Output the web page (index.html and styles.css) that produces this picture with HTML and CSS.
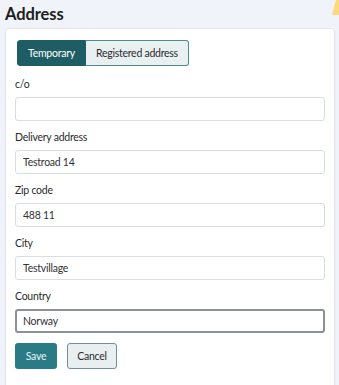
FILE: index.html
```html
<html>
    <head>
        <title>Address</title>
        <link rel="stylesheet" href="styles.css">
    </head>
    <body>
        <div class="corner"></div>
        <h1 class="title">Address</h1>
        <div class="card">
            <div class="toggle">
                <button class="toggleButton active">Temporary</button>
                <button class="toggleButton">Registered address</button>
            </div>
            <form class="addressForm">
                <label class="fieldLabel" for="co">c/o</label>
                <input type="text" id="co" class="field" value="" />

                <label class="fieldLabel" for="delivery">Delivery address</label>
                <input type="text" id="delivery" class="field" value="Testroad 14" />

                <label class="fieldLabel" for="zip">Zip code</label>
                <input type="text" id="zip" class="field" value="488 11" />

                <label class="fieldLabel" for="city">City</label>
                <input type="text" id="city" class="field" value="Testvillage" />

                <label class="fieldLabel" for="country">Country</label>
                <input type="text" id="country" class="field focused" value="Norway" />

                <div class="actions">
                    <button type="button" class="saveButton">Save</button>
                    <button type="button" class="cancelButton">Cancel</button>
                </div>
            </form>
        </div>
    </body>
</html>
```

FILE: styles.css
```css
body{
    margin: 0;
    padding: 0 4px 0 5px;
    background: #f0f3f9;
    font-family: Lato, "Noto Sans", sans-serif;
    color: #2b2b2b;
    position: relative;
    overflow: hidden;
}
.corner{
    position: absolute;
    top: 0;
    right: 0;
    width: 7px;
    height: 15px;
    background: #fcd97a;
    clip-path: polygon(4px 0, 7px 0, 7px 15px, 0 15px);
}
.title{
    margin: 0;
    height: 28px;
    line-height: 28px;
    font-size: 16.5px;
    font-weight: bold;
    letter-spacing: -0.1px;
    color: #1e1e1e;
}
.card{
    background: #ffffff;
    border: 1px solid #e3e6ec;
    border-radius: 3px;
    box-shadow: 0 1px 2px rgba(0,0,0,0.08);
    padding: 11px 9px 11px 9px;
}
.toggle{
    display: flex;
    margin-left: 2px;
}
.toggleButton{
    height: 26px;
    padding: 0 10px;
    font-family: inherit;
    font-size: 10.5px;
    letter-spacing: -0.25px;
    background: #e9f0f2;
    color: #2b2b2b;
    border: 1px solid #4e8a91;
    border-left: none;
    border-radius: 0 3px 3px 0;
}
.toggleButton.active{
    background: #1f5d64;
    color: #ffffff;
    border: 1px solid #1f5d64;
    border-radius: 3px 0 0 3px;
}
.addressForm{
    display: flex;
    flex-direction: column;
}
.fieldLabel{
    margin-top: 9px;
    margin-bottom: 4px;
    line-height: 18px;
    font-size: 10.5px;
    letter-spacing: -0.25px;
    color: #2b2b2b;
}
.field + .fieldLabel{
    margin-top: 7px;
}
.field{
    height: 24px;
    box-sizing: border-box;
    padding: 0 7px;
    font-family: inherit;
    font-size: 10.5px;
    letter-spacing: -0.25px;
    color: #333333;
    border: 1px solid #d8dde3;
    border-radius: 3px;
    outline: none;
}
.field.focused{
    border: 2px solid #8c9196;
    padding: 0 6px;
}
.actions{
    display: flex;
    gap: 10px;
    margin-top: 10px;
}
.saveButton{
    height: 26px;
    width: 42px;
    font-family: inherit;
    font-size: 10.5px;
    letter-spacing: -0.25px;
    background: #2a7b86;
    color: #e8f3f5;
    border: none;
    border-radius: 3px;
}
.cancelButton{
    height: 26px;
    width: 50px;
    font-family: inherit;
    font-size: 10.5px;
    letter-spacing: -0.25px;
    background: #e9eff1;
    color: #2b2b2b;
    border: 1px solid #6f9399;
    border-radius: 3px;
}
```
